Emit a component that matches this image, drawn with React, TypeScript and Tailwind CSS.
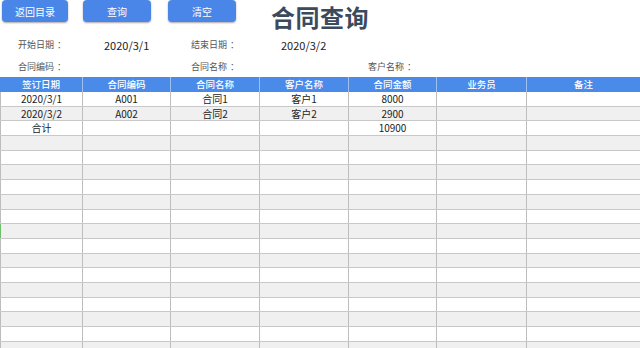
const font = { fontFamily: '"Noto Sans CJK SC", "Microsoft YaHei", sans-serif' }

const cols = ['w-[83px]', 'w-[88px]', 'w-[89px]', 'w-[89px]', 'w-[88px]', 'w-[90px]', 'flex-1']
const heads = ['签订日期', '合同编码', '合同名称', '客户名称', '合同金额', '业务员', '备注']

const data: string[][] = [
  ['2020/3/1', 'A001', '合同1', '客户1', '8000', '', ''],
  ['2020/3/2', 'A002', '合同2', '客户2', '2900', '', ''],
  ['合计', '', '', '', '10900', '', ''],
]

function Btn({ label, className }: { label: string; className: string }) {
  return (
    <button
      className={`h-[22px] rounded-[4px] bg-[#4a86e8] text-[10px] text-white shadow-[0_1px_2px_rgba(0,0,0,0.35)] ${className}`}
    >
      {label}
    </button>
  )
}

function Label({ text, className }: { text: string; className: string }) {
  return (
    <span className={`text-[9px] text-[#555] ${className}`}>
      {text}
      <span className="ml-[3px]">：</span>
    </span>
  )
}

export default function App() {
  const rows = Array.from({ length: 18 }, (_, i) => data[i] ?? ['', '', '', '', '', '', ''])

  return (
    <div className="h-[348px] w-[640px] overflow-hidden bg-white text-[#222]" style={font}>
      <div className="flex h-[34px] items-start">
        <Btn label="返回目录" className="ml-[2px] w-[66px]" />
        <Btn label="查询" className="ml-[15px] w-[68px]" />
        <Btn label="清空" className="ml-[17px] w-[68px]" />
        <div className="ml-[35px] mt-[4px] text-[24px] font-bold leading-[26px] tracking-[0.5px] text-[#3b4a5c]">
          合同查询
        </div>
      </div>

      <div className="flex h-[22px] items-center pl-[18px]">
        <Label text="开始日期" className="w-[86px]" />
        <span className="w-[87px] text-[11px]">2020/3/1</span>
        <Label text="结束日期" className="w-[90px]" />
        <span className="text-[11px]">2020/3/2</span>
      </div>

      <div className="flex h-[21px] items-center pl-[18px]">
        <Label text="合同编码" className="w-[173px]" />
        <Label text="合同名称" className="w-[177px]" />
        <Label text="客户名称" className="" />
      </div>

      <div className="flex h-[15px] bg-[#4a8ae8]">
        {heads.map((h, i) => (
          <div
            key={h}
            className={`${cols[i]} flex items-center justify-center text-[9.5px] font-medium leading-none text-white ${
              i < 6 ? 'border-r border-[#9fc0f0]' : ''
            }`}
          >
            {h}
          </div>
        ))}
      </div>

      {rows.map((r, ri) => (
        <div
          key={ri}
          className={`flex h-[14.7px] border-b border-[#c8c8c8] ${ri % 2 === 1 ? 'bg-[#f0f0f0]' : 'bg-white'}`}
        >
          {r.map((c, ci) => (
            <div
              key={ci}
              className={`${cols[ci]} flex items-center justify-center text-[10px] leading-none ${
                ci < 6 ? 'border-r border-[#bdbdbd]' : ''
              } ${ci === 0 ? (ri === 9 ? 'border-l border-l-[#6cc06c]' : 'border-l border-l-[#bdbdbd]') : ''}`}
            >
              {c}
            </div>
          ))}
        </div>
      ))}
    </div>
  )
}
